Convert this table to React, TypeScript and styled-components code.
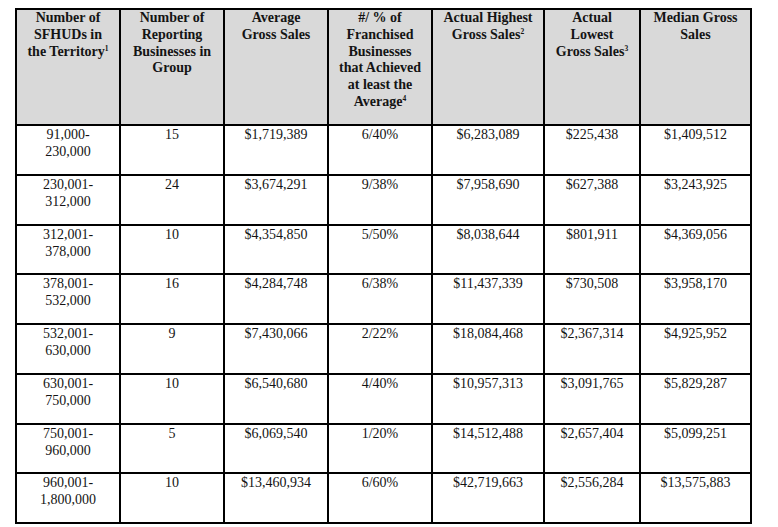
import React from "react";
import styled, { createGlobalStyle } from "styled-components";

const GlobalStyle = createGlobalStyle`
  html, body { margin: 0; padding: 0; background: #ffffff; }
  body { font-family: "Liberation Serif", "Times New Roman", serif; color: #111; }
`;

const Page = styled.div`
  padding: 8px 0 0 15px;
`;

const Table = styled.table`
  border-collapse: collapse;
  table-layout: fixed;
  width: 735px;
  font-family: "Liberation Serif", "Times New Roman", serif;
`;

const HeadCell = styled.th`
  background: #d9d9d9;
  border: 2px solid #000;
  font-weight: bold;
  font-size: 14px;
  line-height: 16.8px;
  vertical-align: top;
  text-align: center;
  padding: 0 2px;
  height: 114px;
  color: #141414;
`;

const Cell = styled.td`
  border: 2px solid #000;
  font-size: 14px;
  line-height: 17.2px;
  vertical-align: top;
  text-align: center;
  padding: 0 2px;
  height: 47.75px;
  color: #141414;
`;

const Sup = styled.sup`
  font-size: 7.5px;
  line-height: 0;
  vertical-align: 5px;
`;

const widths = [104, 104, 104, 104, 112, 96, 111];

type Row = {
  range: [string, string];
  count: string;
  avg: string;
  achieved: string;
  high: string;
  low: string;
  median: string;
};

const rows: Row[] = [
  { range: ["91,000-", "230,000"], count: "15", avg: "$1,719,389", achieved: "6/40%", high: "$6,283,089", low: "$225,438", median: "$1,409,512" },
  { range: ["230,001-", "312,000"], count: "24", avg: "$3,674,291", achieved: "9/38%", high: "$7,958,690", low: "$627,388", median: "$3,243,925" },
  { range: ["312,001-", "378,000"], count: "10", avg: "$4,354,850", achieved: "5/50%", high: "$8,038,644", low: "$801,911", median: "$4,369,056" },
  { range: ["378,001-", "532,000"], count: "16", avg: "$4,284,748", achieved: "6/38%", high: "$11,437,339", low: "$730,508", median: "$3,958,170" },
  { range: ["532,001-", "630,000"], count: "9", avg: "$7,430,066", achieved: "2/22%", high: "$18,084,468", low: "$2,367,314", median: "$4,925,952" },
  { range: ["630,001-", "750,000"], count: "10", avg: "$6,540,680", achieved: "4/40%", high: "$10,957,313", low: "$3,091,765", median: "$5,829,287" },
  { range: ["750,001-", "960,000"], count: "5", avg: "$6,069,540", achieved: "1/20%", high: "$14,512,488", low: "$2,657,404", median: "$5,099,251" },
  { range: ["960,001-", "1,800,000"], count: "10", avg: "$13,460,934", achieved: "6/60%", high: "$42,719,663", low: "$2,556,284", median: "$13,575,883" },
];

export default function App() {
  return (
    <Page>
      <GlobalStyle />
      <Table>
        <colgroup>
          {widths.map((w, i) => (
            <col key={i} style={{ width: w }} />
          ))}
        </colgroup>
        <thead>
          <tr>
            <HeadCell>
              Number of<br />SFHUDs in<br />the Territory<Sup>1</Sup>
            </HeadCell>
            <HeadCell>
              Number of<br />Reporting<br />Businesses in<br />Group
            </HeadCell>
            <HeadCell>
              Average<br />Gross Sales
            </HeadCell>
            <HeadCell>
              #/ % of<br />Franchised<br />Businesses<br />that Achieved<br />at least the<br />Average<Sup>4</Sup>
            </HeadCell>
            <HeadCell>
              Actual Highest<br />Gross Sales<Sup>2</Sup>
            </HeadCell>
            <HeadCell>
              Actual<br />Lowest<br />Gross Sales<Sup>3</Sup>
            </HeadCell>
            <HeadCell>
              Median Gross<br />Sales
            </HeadCell>
          </tr>
        </thead>
        <tbody>
          {rows.map((r) => (
            <tr key={r.range[0]}>
              <Cell>
                {r.range[0]}<br />{r.range[1]}
              </Cell>
              <Cell>{r.count}</Cell>
              <Cell>{r.avg}</Cell>
              <Cell>{r.achieved}</Cell>
              <Cell>{r.high}</Cell>
              <Cell>{r.low}</Cell>
              <Cell>{r.median}</Cell>
            </tr>
          ))}
        </tbody>
      </Table>
    </Page>
  );
}
